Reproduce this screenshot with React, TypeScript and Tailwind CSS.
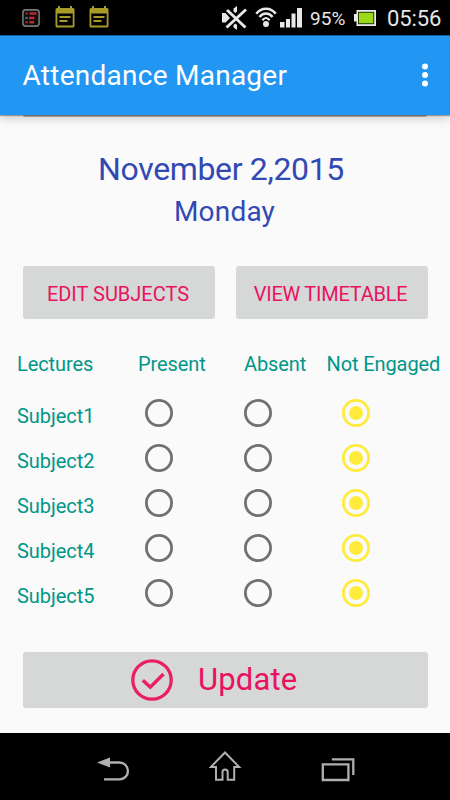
import { useState } from 'react'

const subjects = ['Subject1', 'Subject2', 'Subject3', 'Subject4', 'Subject5']
const options = ['Present', 'Absent', 'Not Engaged']

function NoteIcon() {
  return (
    <svg width="20" height="22" viewBox="0 0 20 22">
      <path d="M3 0h2v2h10V0h2v2h1q1.500 0 1.500 1.500V20q0 1.500-1.500 1.500H2Q.500 21.500.500 20V3.500Q.500 2 2 2h1z" fill="#a89a28" />
      <path d="M2.300 7.500h15.400v12H2.300z" fill="#000" />
      <path d="M4.500 10h11v2h-11zM4.500 14h8v2h-8z" fill="#a89a28" />
    </svg>
  )
}

function StatusBar() {
  return (
    <div className="flex h-[35px] shrink-0 items-start bg-black text-[#e6e6e6]">
      <svg className="mt-[9px] ml-[22px]" width="18" height="18" viewBox="0 0 18 18">
        <rect x="0.900" y="0.900" width="16.200" height="16.200" rx="2.800" fill="#0c0c0c" stroke="#777" strokeWidth="1.600" />
        <path d="M7.500 4.500h7M7 9h5.500M7.500 13.300h4.500" stroke="#c0282c" strokeWidth="2.600" />
        <path d="M3.500 4.500h2.200M3.500 13.300h2.200" stroke="#c0282c" strokeWidth="2" />
        <path d="M3.300 9h2.400" stroke="#3f7390" strokeWidth="2.200" />
      </svg>
      <div className="mt-1.5 ml-[15px] flex gap-3.5">
        <NoteIcon />
        <NoteIcon />
      </div>
      <svg className="mt-[5px] ml-[113px]" width="26" height="26" viewBox="0 0 26 26">
        <path d="M0 8h3.500l4.500 5-4.500 4.500H0zM11.500 3.500 15 1v5.500l-1.500 1.500-2-1.500zM11.500 22.500l3.500 2.500v-5l-1.500-1.500-2 1.500z" fill="#e8e8e8" />
        <path d="M5 5 23.500 22.500M24 4.500 4.500 22.500" stroke="#000" strokeWidth="4.200" />
        <path d="M5 5 23.500 22.500M24 4.500 4.500 22.500" stroke="#e8e8e8" strokeWidth="2.900" />
      </svg>
      <svg className="mt-1.5 ml-[7px]" width="22" height="22" viewBox="0 0 22 22" fill="none" stroke="#e8e8e8">
        <path d="M1.300 7.800C6 1 16 1 20.700 7.800" strokeWidth="2.500" />
        <path d="M4.500 11C8 6.200 14 6.200 17.500 11" strokeWidth="2.500" />
        <path d="M7.300 14.200Q11 9.800 14.700 14.200" strokeWidth="2.200" />
        <circle cx="11" cy="17.900" r="3" fill="#e8e8e8" stroke="none" />
      </svg>
      <svg className="mt-2 ml-[3px]" width="22" height="20" viewBox="0 0 22 20" fill="#e8e8e8">
        <path d="M0 14h4.500v5.500H0zM6 11h4v8.500H6zM11.500 5.500h4v14h-4zM17 0h5v19.500h-5z" />
      </svg>
      <span className="mt-[7px] ml-2 w-[37px] text-[19px] leading-6 tracking-[0.100px] whitespace-nowrap">95%</span>
      <svg className="mt-2.5 ml-[7px]" width="22" height="16" viewBox="0 0 22 16">
        <path d="M2.500 0H22v16H2.500v-4.500H0V4h2.500z" fill="#e8e8e8" />
        <rect x="4" y="1.800" width="16.200" height="12.400" fill="#273800" />
        <rect x="5" y="2.800" width="14.200" height="10.400" fill="#9ada18" />
      </svg>
      <span className="mt-[7px] ml-[11px] text-[22px] leading-6 tracking-[-0.100px] whitespace-nowrap">05:56</span>
    </div>
  )
}

function Radio({ checked, onClick, label }: { checked: boolean; onClick: () => void; label: string }) {
  const color = checked ? '#ffeb3b' : '#717171'

  return (
    <button role="radio" aria-checked={checked} aria-label={label} onClick={onClick} className="size-7">
      <svg width="28" height="28" viewBox="0 0 28 28">
        <circle cx="14" cy="14" r="12.600" fill="none" stroke={color} strokeWidth="2.800" />
        {checked && <circle cx="14" cy="14" r="7" fill={color} />}
      </svg>
    </button>
  )
}

function NavBar() {
  return (
    <nav className="flex h-[67px] shrink-0 items-start bg-black">
      <svg className="mt-[21px] ml-[97px]" width="34" height="28" viewBox="0 0 34 28">
        <path d="M0 8.500 13 3.500v10z" fill="#b0b0b0" />
        <path d="M12 8.500h10.500a8.450 8.450 0 0 1 0 16.900H7" fill="none" stroke="#b0b0b0" strokeWidth="2.400" />
      </svg>
      <svg className="mt-[17px] ml-[78px]" width="33" height="32" viewBox="0 0 33 32" fill="none" stroke="#b0b0b0" strokeWidth="2">
        <path d="M16 2.500 1.800 17H7v12.800h6.500V22a2.600 2.600 0 0 1 5.200 0v7.800h6.500V17h5z" />
      </svg>
      <svg className="mt-[21px] ml-[79px]" width="34" height="28" viewBox="0 0 34 28" fill="none" stroke="#b0b0b0" strokeWidth="2.300">
        <path d="M1.800 10.300h25.600V26H1.800zM10.800 5.400h21.500V21" />
      </svg>
    </nav>
  )
}

export default function App() {
  const [answers, setAnswers] = useState<number[]>(subjects.map(() => 2))

  const select = (row: number, option: number) => {
    setAnswers(answers.map((a, i) => (i === row ? option : a)))
  }

  return (
    <div className="flex h-[800px] w-[450px] flex-col overflow-hidden bg-[#fafafa] font-[Roboto,sans-serif]">
      <StatusBar />
      <header className="z-10 flex h-20 shrink-0 items-center justify-between border-t border-[#14609c] bg-[#2196f3] pr-[22px] pl-[22.500px] shadow-[0_1px_1px_rgba(0,0,0,0.300),0_3px_10px_rgba(0,0,0,0.200)]">
        <h1 className="text-[28px] leading-8 tracking-[0.260px] whitespace-nowrap text-white">Attendance Manager</h1>
        <svg className="-mt-0.5" width="6" height="24" viewBox="0 0 6 24" fill="#fff">
          <circle cx="3" cy="3.500" r="3" />
          <circle cx="3" cy="12" r="3" />
          <circle cx="3" cy="20.500" r="3" />
        </svg>
      </header>

      <main className="flex flex-1 flex-col">
        <div className="mx-[23px] h-0.5 rounded-b-sm bg-[#b9b9b9]" />
        <div className="mt-[31px] flex flex-col items-center text-[#3249b4]">
          <p className="pr-[8px] text-[32px] leading-[42px] tracking-[-0.350px] whitespace-nowrap">November 2,2015</p>
          <p className="pt-px pr-[1px] text-[28px] leading-[42px] tracking-[0.200px] whitespace-nowrap">Monday</p>
        </div>

        <div className="mt-[33px] grid grid-cols-2 gap-[21px] px-[22.500px] text-[20px] text-[#e9125f]">
          <button className="h-[53px] rounded-[3px] bg-[#d6d7d7] pt-0.5 pr-px whitespace-nowrap">EDIT SUBJECTS</button>
          <button className="h-[53px] rounded-[3px] bg-[#d6d7d7] pt-0.5 pr-0.5 tracking-[-0.250px] whitespace-nowrap">VIEW TIMETABLE</button>
        </div>

        <div className="mt-[33px] grid grid-cols-[121px_106px_82.500px_1fr] pl-[17px] text-[20px] leading-6 tracking-[-0.100px] whitespace-nowrap text-[#009688]">
          <span>Lectures</span>
          {options.map((o) => (
            <span key={o}>{o}</span>
          ))}
        </div>

        <div className="mt-3.5 flex flex-col">
          {subjects.map((subject, i) => (
            <div key={subject} className="grid h-[45px] grid-cols-[128px_98.500px_98.500px_1fr] items-center pl-[17px]">
              <span className="pt-[7px] text-[20px] leading-6 tracking-[-0.050px] text-[#009688]">{subject}</span>
              {options.map((o, j) => (
                <Radio key={o} label={`${subject} ${o}`} checked={answers[i] === j} onClick={() => select(i, j)} />
              ))}
            </div>
          ))}
        </div>

        <button className="mx-[22.500px] mt-[37px] flex h-14 items-center rounded-[3px] bg-[#d6d7d7] pl-[108px] text-[#e9125f]">
          <svg width="42" height="42" viewBox="0 0 42 42" fill="none" stroke="#e91e63">
            <circle cx="21" cy="21" r="19.200" strokeWidth="3.300" />
            <path d="m11.800 21.300 7.500 6.900L32.500 15" strokeWidth="3.500" />
          </svg>
          <span className="ml-[25.500px] text-[31px] leading-10 tracking-[0.150px]">Update</span>
        </button>
      </main>
      <NavBar />
    </div>
  )
}
